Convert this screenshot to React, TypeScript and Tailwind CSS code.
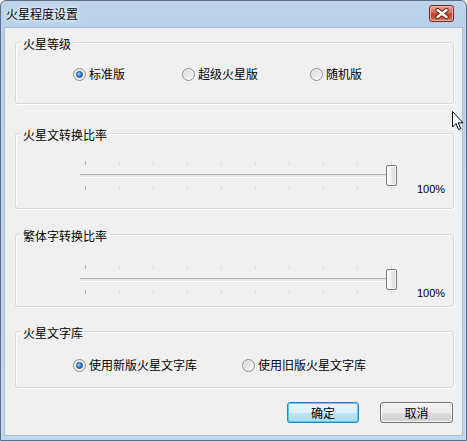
import React from "react";

const FONT = "font-['Noto_Sans_CJK_SC','Microsoft_YaHei',sans-serif]";

function Radio({ checked, label, className = "" }: { checked?: boolean; label: string; className?: string }) {
  return (
    <div className={`flex items-center gap-[3px] ${className}`}>
      <div className="flex h-[13px] w-[13px] items-center justify-center rounded-full border border-[#8e8f8f] bg-[linear-gradient(135deg,#d4d4d4,#fbfbfb)] shadow-[inset_0_0_0_1px_#f4f4f4]">
        {checked && (
          <div className="h-[7px] w-[7px] rounded-full border border-[#1c4f86] bg-[radial-gradient(circle_at_35%_35%,#a6dcff,#2a7fd0_55%,#174f8f)]" />
        )}
      </div>
      <span className="text-[12px] leading-[14px] text-black">{label}</span>
    </div>
  );
}

function GroupBox({ title, className = "", children }: { title: string; className?: string; children?: React.ReactNode }) {
  return (
    <div
      className={`box-border rounded-[3px] border border-[#d0dae0] shadow-[inset_1px_1px_0_#fff,1px_1px_0_#fff] ${className}`}
    >
      <div className="-mt-[6px] ml-[5px] h-[14px] w-fit bg-[#f0f0f0] px-[2px] text-[12px] leading-[14px] text-black">
        {title}
      </div>
      {children}
    </div>
  );
}

function Ticks() {
  return (
    <div className="flex h-[4px] justify-between px-[5px]">
      {Array.from({ length: 10 }).map((_, i) => (
        <div key={i} className={`h-[4px] w-px ${i === 0 ? "bg-[#b4b4b4]" : "bg-[#dcdcdc]"}`} />
      ))}
    </div>
  );
}

function Slider({ className = "" }: { className?: string }) {
  return (
    <div className={`ml-[64px] flex items-start ${className}`}>
      <div className="relative h-[30px] w-[317px]">
        <Ticks />
        <div className="mt-[9px] h-[3px] border-t border-[#b4b4b4] bg-[#e6e6e6] shadow-[0_1px_0_#fff]" />
        <div className="mt-[9px]">
          <Ticks />
        </div>
        {/* thumb */}
        <div className="absolute right-0 top-[4px] h-[21px] w-[11px] rounded-[2px] border border-[#7a7a7a] bg-[linear-gradient(90deg,#ffffff,#e8e8e8_60%,#d6d6d6)] shadow-[inset_0_0_0_1px_#fff]" />
      </div>
      <span className="ml-[20px] mt-[22px] font-['Liberation_Sans',sans-serif] text-[11px] leading-[12px] text-[#000]">
        100%
      </span>
    </div>
  );
}

function CloseIcon() {
  return (
    <svg width="14" height="11" viewBox="0 0 14 11">
      <path d="M2.5 2 L11.5 9 M11.5 2 L2.5 9" stroke="#5a1a10" strokeWidth="4.2" strokeLinecap="round" />
      <path d="M2.5 2 L11.5 9 M11.5 2 L2.5 9" stroke="#ffffff" strokeWidth="2.4" strokeLinecap="round" />
    </svg>
  );
}

function Button({ label, isDefault }: { label: string; isDefault?: boolean }) {
  return (
    <button
      className={`flex h-[21px] items-center justify-center rounded-[3px] border text-[12px] leading-[14px] text-black ${
        isDefault
          ? "w-[72px] border-[#3c7fb1] bg-[linear-gradient(180deg,#eaf6fd_0%,#d9f0fc_50%,#bee6fd_51%,#a7d9f5_100%)] shadow-[inset_0_0_0_1px_#48d0ff]"
          : "w-[73px] border-[#707070] bg-[linear-gradient(180deg,#f2f2f2_0%,#ebebeb_50%,#dddddd_51%,#cfcfcf_100%)] shadow-[inset_0_0_0_1px_#fcfcfc]"
      }`}
    >
      {label}
    </button>
  );
}

export default function App() {
  return (
    <div className={`relative h-[441px] w-[467px] ${FONT}`}>
      <div className="flex h-full w-full flex-col rounded-t-[6px] border border-[#5b6f87] bg-[linear-gradient(180deg,#bdd3ea,#b9d1ea_30px,#c2d8ef)]">
        {/* Title bar */}
        <div className="flex h-[26px] shrink-0 items-center justify-between pl-[5px]">
          <span className="text-[12px] leading-[14px] text-black [text-shadow:0_0_6px_#fff,0_0_3px_#fff]">火星程度设置</span>
          <div className="mr-[12px] mt-[-1px] flex h-[17px] w-[25px] items-center justify-center rounded-[3px] border border-[#6b2a20] bg-[linear-gradient(180deg,#e8a192,#d46a55_45%,#c23c22_55%,#d97b5c)] shadow-[inset_0_0_0_1px_#eeb4a4]">
            <CloseIcon />
          </div>
        </div>

        {/* Content */}
        <div className="mx-[3px] mb-[4px] flex flex-1 flex-col border border-[#a8bdd6] bg-[#f0f0f0] pl-[10px] pr-[8px]">
          <GroupBox title="火星等级" className="mt-[14px] h-[62px]">
            <div className="ml-[57px] mt-[16px] flex">
              <Radio checked label="标准版" className="w-[109px]" />
              <Radio label="超级火星版" className="w-[128px]" />
              <Radio label="随机版" />
            </div>
          </GroupBox>

          <GroupBox title="火星文转换比率" className="mt-[29px] h-[76px]">
            <Slider className="mt-[19px]" />
          </GroupBox>

          <GroupBox title="繁体字转换比率" className="mt-[25px] h-[73px]">
            <Slider className="mt-[22px]" />
          </GroupBox>

          <GroupBox title="火星文字库" className="mt-[24px] h-[57px]">
            <div className="ml-[57px] mt-[18px] flex">
              <Radio checked label="使用新版火星文字库" className="w-[169px]" />
              <Radio label="使用旧版火星文字库" />
            </div>
          </GroupBox>

          <div className="mt-[14px] flex justify-end gap-[21px] pr-[1px]">
            <Button label="确定" isDefault />
            <Button label="取消" />
          </div>
        </div>
      </div>

      {/* mouse pointer */}
      <svg className="absolute left-[452px] top-[111px]" width="12" height="20" viewBox="0 0 12 20">
        <path
          d="M0.5 0.5 L0.5 16 L4 12.5 L6.5 18.5 L8.7 17.6 L6.3 11.8 L11 11.8 Z"
          fill="#fff"
          stroke="#000"
          strokeWidth="1"
          strokeLinejoin="round"
        />
      </svg>
    </div>
  );
}
